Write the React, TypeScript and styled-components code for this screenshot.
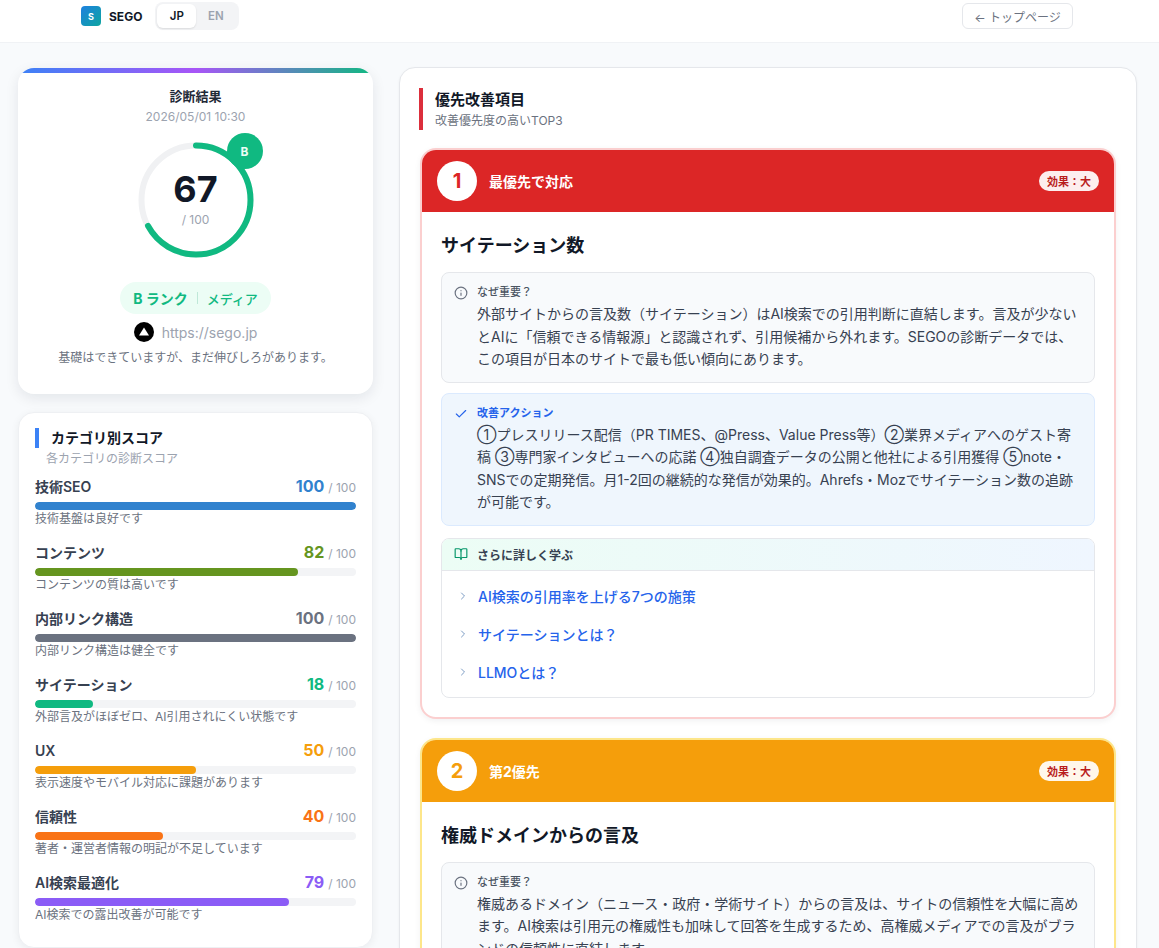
import { createGlobalStyle, styled } from 'styled-components';
import { BookOpen, Check, ChevronRight, Info } from 'lucide-react';

const GlobalStyle = createGlobalStyle`
  html, body {
    margin: 0;
    height: 100%;
    overflow: hidden;
    background: #f8fafc;
    color: #111827;
    font-family: Inter, "Noto Sans CJK JP", sans-serif;
    -webkit-font-smoothing: antialiased;
  }
  * { box-sizing: border-box; }
`;

const categories = [
  { name: '技術SEO', score: 100, color: '#3182ce', note: '技術基盤は良好です' },
  { name: 'コンテンツ', score: 82, color: '#65951f', note: 'コンテンツの質は高いです' },
  { name: '内部リンク構造', score: 100, color: '#6b7280', note: '内部リンク構造は健全です' },
  { name: 'サイテーション', score: 18, color: '#10b981', note: '外部言及がほぼゼロ、AI引用されにくい状態です' },
  { name: 'UX', score: 50, color: '#f59e0b', note: '表示速度やモバイル対応に課題があります' },
  { name: '信頼性', score: 40, color: '#f97316', note: '著者・運営者情報の明記が不足しています' },
  { name: 'AI検索最適化', score: 79, color: '#8b5cf6', note: 'AI検索での露出改善が可能です' },
];

const links = ['AI検索の引用率を上げる7つの施策', 'サイテーションとは？', 'LLMOとは？'];

export default function App() {
  return (
    <>
      <GlobalStyle />
      <Header>
        <Brand>
          <LogoMark>S</LogoMark>
          <BrandName>SEGO</BrandName>
          <LangToggle>
            <LangButton $active>JP</LangButton>
            <LangButton>EN</LangButton>
          </LangToggle>
        </Brand>
        <BackButton>← トップページ</BackButton>
      </Header>
      <Main>
        <Sidebar>
          <ResultCard>
            <GradientBar />
            <ResultBody>
              <ResultTitle>診断結果</ResultTitle>
              <ResultDate>2026/05/01 10:30</ResultDate>
              <Gauge>
                <svg width="116" height="116" viewBox="0 0 116 116">
                  <circle cx="58" cy="58" r="54.5" fill="none" stroke="#f0f1f3" strokeWidth="6" />
                  <circle
                    cx="58"
                    cy="58"
                    r="54.5"
                    fill="none"
                    stroke="#10b981"
                    strokeWidth="6"
                    strokeLinecap="round"
                    strokeDasharray={`${2 * Math.PI * 54.5 * 0.67} 400`}
                    transform="rotate(-90 58 58)"
                  />
                </svg>
                <GaugeText>
                  <GaugeScore>67</GaugeScore>
                  <GaugeMax>/ 100</GaugeMax>
                </GaugeText>
                <RankBadge>B</RankBadge>
              </Gauge>
              <RankPill>
                <RankLabel>B ランク</RankLabel>
                <RankDivider />
                <RankType>メディア</RankType>
              </RankPill>
              <UrlRow>
                <svg width="20" height="20" viewBox="0 0 20 20">
                  <circle cx="10" cy="10" r="10" fill="#000" />
                  <path d="M10 5.6 15 13.6H5Z" fill="#fff" />
                </svg>
                <UrlText>https://sego.jp</UrlText>
              </UrlRow>
              <ResultNote>基礎はできていますが、まだ伸びしろがあります。</ResultNote>
            </ResultBody>
          </ResultCard>

          <ScoreCard>
            <ScoreHead>カテゴリ別スコア</ScoreHead>
            <ScoreSub>各カテゴリの診断スコア</ScoreSub>
            <ScoreList>
              {categories.map(c => (
                <ScoreItem key={c.name}>
                  <ScoreRow>
                    <ScoreName>{c.name}</ScoreName>
                    <ScoreValue>
                      <ScoreNumber $color={c.color}>{c.score}</ScoreNumber>
                      <ScoreMax>/ 100</ScoreMax>
                    </ScoreValue>
                  </ScoreRow>
                  <Track>
                    <Fill $color={c.color} style={{ width: `${c.score}%` }} />
                  </Track>
                  <ScoreNote>{c.note}</ScoreNote>
                </ScoreItem>
              ))}
            </ScoreList>
          </ScoreCard>
        </Sidebar>

        <Panel>
          <PanelHead>
            <PanelTitle>優先改善項目</PanelTitle>
            <PanelSub>改善優先度の高いTOP3</PanelSub>
          </PanelHead>

          <Priority $border="#fbcfcf">
            <PriorityHead $bg="#dc2626">
              <Rank $color="#dc2626">1</Rank>
              <PriorityLabel>最優先で対応</PriorityLabel>
              <Effect $color="#b91c1c">効果：大</Effect>
            </PriorityHead>
            <PriorityBody>
              <ItemTitle>サイテーション数</ItemTitle>
              <WhyBox>
                <Info size={14} color="#6b7280" />
                <div>
                  <WhyLabel>なぜ重要？</WhyLabel>
                  <BoxText>
                    外部サイトからの言及数（サイテーション）はAI検索での引用判断に直結します。言及が少ないとAIに「信頼できる情報源」と認識されず、引用候補から外れます。SEGOの診断データでは、この項目が日本のサイトで最も低い傾向にあります。
                  </BoxText>
                </div>
              </WhyBox>
              <ActionBox>
                <Check size={14} color="#2563eb" />
                <div>
                  <ActionLabel>改善アクション</ActionLabel>
                  <BoxText>
                    ①プレスリリース配信（PR TIMES、@Press、Value Press等）②業界メディアへのゲスト寄稿 ③専門家インタビューへの応諾 ④独自調査データの公開と他社による引用獲得 ⑤note・SNSでの定期発信。月1-2回の継続的な発信が効果的。Ahrefs・Mozでサイテーション数の追跡が可能です。
                  </BoxText>
                </div>
              </ActionBox>
              <LearnBox>
                <LearnHead>
                  <BookOpen size={14} color="#059669" />
                  さらに詳しく学ぶ
                </LearnHead>
                <LearnList>
                  {links.map(l => (
                    <LearnLink key={l}>
                      <ChevronRight size={12} color="#7c9cc4" />
                      {l}
                    </LearnLink>
                  ))}
                </LearnList>
              </LearnBox>
            </PriorityBody>
          </Priority>

          <Priority $border="#fde68a">
            <PriorityHead $bg="#f59e0b">
              <Rank $color="#f59e0b">2</Rank>
              <PriorityLabel>第2優先</PriorityLabel>
              <Effect $color="#b91c1c">効果：大</Effect>
            </PriorityHead>
            <PriorityBody>
              <ItemTitle>権威ドメインからの言及</ItemTitle>
              <WhyBox>
                <Info size={14} color="#6b7280" />
                <div>
                  <WhyLabel>なぜ重要？</WhyLabel>
                  <BoxText>
                    権威あるドメイン（ニュース・政府・学術サイト）からの言及は、サイトの信頼性を大幅に高めます。AI検索は引用元の権威性も加味して回答を生成するため、高権威メディアでの言及がブランドの信頼性に直結します。
                  </BoxText>
                </div>
              </WhyBox>
            </PriorityBody>
          </Priority>
        </Panel>
      </Main>
    </>
  );
}

const Header = styled.header`
  height: 43px;
  background: #fff;
  border-bottom: 1px solid #f0f2f5;
  display: flex;
  justify-content: space-between;
  align-items: flex-start;
  padding: 2px 86px 0 81px;
`;

const Brand = styled.div`
  display: flex;
  align-items: center;
  height: 28px;
`;

const LogoMark = styled.div`
  width: 20px;
  height: 20px;
  border-radius: 4px;
  background: linear-gradient(135deg, #1d80e0, #0ea5a0);
  color: #fff;
  font-size: 9px;
  font-weight: 700;
  display: flex;
  align-items: center;
  justify-content: center;
`;

const BrandName = styled.span`
  margin-left: 8px;
  font-size: 12px;
  font-weight: 700;
  color: #111827;
`;

const LangToggle = styled.div`
  margin-left: 13px;
  width: 84px;
  height: 28px;
  padding: 2px;
  background: #f3f4f6;
  border-radius: 8px;
  display: flex;
`;

const LangButton = styled.div<{ $active?: boolean }>`
  width: 39px;
  border-radius: 6px;
  font-size: 11.5px;
  font-weight: 600;
  display: flex;
  align-items: center;
  justify-content: center;
  color: ${p => (p.$active ? '#111827' : '#9ca3af')};
  background: ${p => (p.$active ? '#fff' : 'transparent')};
  box-shadow: ${p => (p.$active ? '0 1px 2px rgba(0,0,0,0.1)' : 'none')};
`;

const BackButton = styled.div`
  margin-top: 1px;
  width: 111px;
  height: 26px;
  border: 1px solid #e5e7eb;
  border-radius: 6px;
  background: #fff;
  color: #6b7280;
  font-size: 12px;
  display: flex;
  align-items: center;
  justify-content: center;
`;

const Main = styled.main`
  display: grid;
  grid-template-columns: 355px 738px;
  gap: 26px;
  padding: 25px 0 0 18px;
  height: 905px;
  overflow: hidden;
`;

const Sidebar = styled.div`
  display: flex;
  flex-direction: column;
  gap: 18px;
`;

const ResultCard = styled.section`
  height: 326px;
  flex-shrink: 0;
  background: #fff;
  border-radius: 16px;
  overflow: hidden;
  box-shadow: 0 4px 14px rgba(15, 23, 42, 0.09);
`;

const GradientBar = styled.div`
  height: 5px;
  background: linear-gradient(90deg, #3b82f6, #a855f7 50%, #10b981);
`;

const ResultBody = styled.div`
  display: flex;
  flex-direction: column;
  align-items: center;
  padding-top: 14px;
`;

const ResultTitle = styled.div`
  font-size: 13px;
  font-weight: 700;
  line-height: 18px;
  color: #1f2937;
`;

const ResultDate = styled.div`
  margin-top: 4px;
  font-size: 12px;
  line-height: 16px;
  color: #9ca3af;
`;

const Gauge = styled.div`
  position: relative;
  margin-top: 17px;
  width: 116px;
  height: 116px;
  svg { display: block; }
`;

const GaugeText = styled.div`
  position: absolute;
  inset: 0;
  display: flex;
  flex-direction: column;
  align-items: center;
  padding-top: 27px;
`;

const GaugeScore = styled.div`
  font-size: 36px;
  font-weight: 700;
  line-height: 40px;
  color: #111827;
`;

const GaugeMax = styled.div`
  margin-top: 3px;
  font-size: 12px;
  line-height: 16px;
  color: #9ca3af;
`;

const RankBadge = styled.div`
  position: absolute;
  top: -9px;
  right: -9px;
  width: 36px;
  height: 36px;
  border-radius: 50%;
  background: #10b981;
  color: #ecfdf5;
  font-size: 12px;
  font-weight: 700;
  display: flex;
  align-items: center;
  justify-content: center;
`;

const RankPill = styled.div`
  margin-top: 24px;
  height: 32px;
  padding: 0 13px;
  border-radius: 16px;
  background: #ecfdf5;
  display: flex;
  align-items: center;
  gap: 9px;
`;

const RankLabel = styled.span`
  font-size: 14px;
  font-weight: 700;
  color: #10b981;
`;

const RankDivider = styled.span`
  width: 1px;
  height: 12px;
  background: #bfe8d8;
`;

const RankType = styled.span`
  font-size: 13px;
  font-weight: 500;
  color: #10b981;
`;

const UrlRow = styled.div`
  margin-top: 8px;
  display: flex;
  align-items: center;
  gap: 8px;
  height: 20px;
`;

const UrlText = styled.span`
  font-size: 14px;
  color: #9ca3af;
`;

const ResultNote = styled.div`
  margin-top: 8px;
  font-size: 12px;
  line-height: 16px;
  color: #6b7280;
`;

const ScoreCard = styled.section`
  background: #fff;
  border: 1px solid #eef0f3;
  border-radius: 16px;
  padding: 15px 15px 0;
  height: 536px;
  flex-shrink: 0;
  box-shadow: 0 2px 8px rgba(15, 23, 42, 0.06);
`;

const ScoreHead = styled.h2`
  margin: 0 0 0 1px;
  padding-left: 12px;
  border-left: 4px solid #3b82f6;
  font-size: 14px;
  font-weight: 700;
  line-height: 20px;
  color: #111827;
`;

const ScoreSub = styled.div`
  margin: 2px 0 0 12px;
  font-size: 12px;
  line-height: 18px;
  color: #9ca3af;
`;

const ScoreList = styled.div`
  margin-top: 6px;
  padding-left: 1px;
  padding-right: 1px;
  display: flex;
  flex-direction: column;
  gap: 0;
`;

const ScoreItem = styled.div`
  height: 66px;
`;

const ScoreRow = styled.div`
  display: flex;
  justify-content: space-between;
  align-items: center;
  height: 24px;
`;

const ScoreName = styled.span`
  font-size: 14px;
  font-weight: 600;
  color: #374151;
`;

const ScoreValue = styled.span`
  display: flex;
  align-items: baseline;
  gap: 4px;
`;

const ScoreNumber = styled.span<{ $color: string }>`
  font-size: 16px;
  font-weight: 700;
  color: ${p => p.$color};
`;

const ScoreMax = styled.span`
  font-size: 12px;
  color: #9ca3af;
`;

const Track = styled.div`
  margin-top: 4px;
  height: 8px;
  border-radius: 4px;
  background: #f3f4f6;
  overflow: hidden;
`;

const Fill = styled.div<{ $color: string }>`
  height: 100%;
  border-radius: 4px;
  background: ${p => p.$color};
`;

const ScoreNote = styled.div`
  margin-top: 1px;
  font-size: 12px;
  line-height: 16px;
  color: #6b7280;
`;

const Panel = styled.section`
  align-self: start;
  margin-top: -1px;
  background: #fff;
  border: 1px solid #e5e7eb;
  border-radius: 16px;
  padding: 20px 20px 20px;
  display: flex;
  flex-direction: column;
  gap: 19px;
  box-shadow: 0 1px 3px rgba(15, 23, 42, 0.05);
`;

const PanelHead = styled.div`
  margin-left: -1px;
  height: 42px;
  padding-left: 12px;
  border-left: 4px solid #dc2f3c;
  margin-bottom: -1px;
`;

const PanelTitle = styled.h2`
  margin: 0;
  font-size: 15px;
  font-weight: 700;
  line-height: 24px;
  color: #111827;
`;

const PanelSub = styled.div`
  font-size: 12px;
  line-height: 18px;
  color: #6b7280;
`;

const Priority = styled.article<{ $border: string }>`
  flex-shrink: 0;
  border: 2px solid ${p => p.$border};
  border-radius: 16px;
  overflow: hidden;
  background: #fff;
  box-shadow: 0 2px 6px rgba(15, 23, 42, 0.06);
`;

const PriorityHead = styled.div<{ $bg: string }>`
  height: 62px;
  padding: 0 15px;
  background: ${p => p.$bg};
  display: flex;
  align-items: center;
`;

const Rank = styled.div<{ $color: string }>`
  width: 40px;
  height: 40px;
  border-radius: 50%;
  background: #fff;
  color: ${p => p.$color};
  font-size: 20px;
  font-weight: 700;
  display: flex;
  align-items: center;
  justify-content: center;
`;

const PriorityLabel = styled.span`
  margin-left: 12px;
  font-size: 14px;
  font-weight: 700;
  color: #fff;
  flex: 1;
`;

const Effect = styled.span<{ $color: string }>`
  height: 20px;
  padding: 0 8px;
  border-radius: 10px;
  background: rgba(255, 255, 255, 0.92);
  color: ${p => p.$color};
  font-size: 11px;
  font-weight: 700;
  display: flex;
  align-items: center;
`;

const PriorityBody = styled.div`
  padding: 22px 19px 19px;
`;

const ItemTitle = styled.h3`
  margin: 0 0 14px;
  font-size: 18px;
  font-weight: 700;
  line-height: 24px;
  color: #111827;
`;

const WhyBox = styled.div`
  display: grid;
  grid-template-columns: 14px 1fr;
  column-gap: 9px;
  padding: 11px 12px 11px;
  background: #f8fafc;
  border: 1px solid #e5e7eb;
  border-radius: 8px;
  svg { margin-top: 2px; }
`;

const ActionBox = styled(WhyBox)`
  margin-top: 10px;
  background: #eff6fd;
  border-color: #dbeafe;
  padding-bottom: 11px;
`;

const WhyLabel = styled.div`
  font-size: 11px;
  line-height: 16px;
  font-weight: 500;
  color: #4b5563;
`;

const ActionLabel = styled(WhyLabel)`
  font-weight: 700;
  color: #2563eb;
`;

const BoxText = styled.p`
  margin: 3px 0 0;
  font-size: 14px;
  line-height: 22.5px;
  color: #374151;
`;

const LearnBox = styled.div`
  margin-top: 12px;
  border: 1px solid #e5e7eb;
  border-radius: 8px;
  overflow: hidden;
`;

const LearnHead = styled.div`
  height: 32px;
  padding: 0 12px;
  background: linear-gradient(90deg, #ecfdf5, #eff6ff);
  border-bottom: 1px solid #e5e7eb;
  display: flex;
  align-items: center;
  gap: 9px;
  font-size: 12px;
  font-weight: 600;
  color: #374151;
`;

const LearnList = styled.div`
  padding: 6px 0 6px;
`;

const LearnLink = styled.a`
  height: 38px;
  padding: 0 15px;
  display: flex;
  align-items: center;
  gap: 9px;
  font-size: 14px;
  font-weight: 500;
  color: #2563eb;
`;
